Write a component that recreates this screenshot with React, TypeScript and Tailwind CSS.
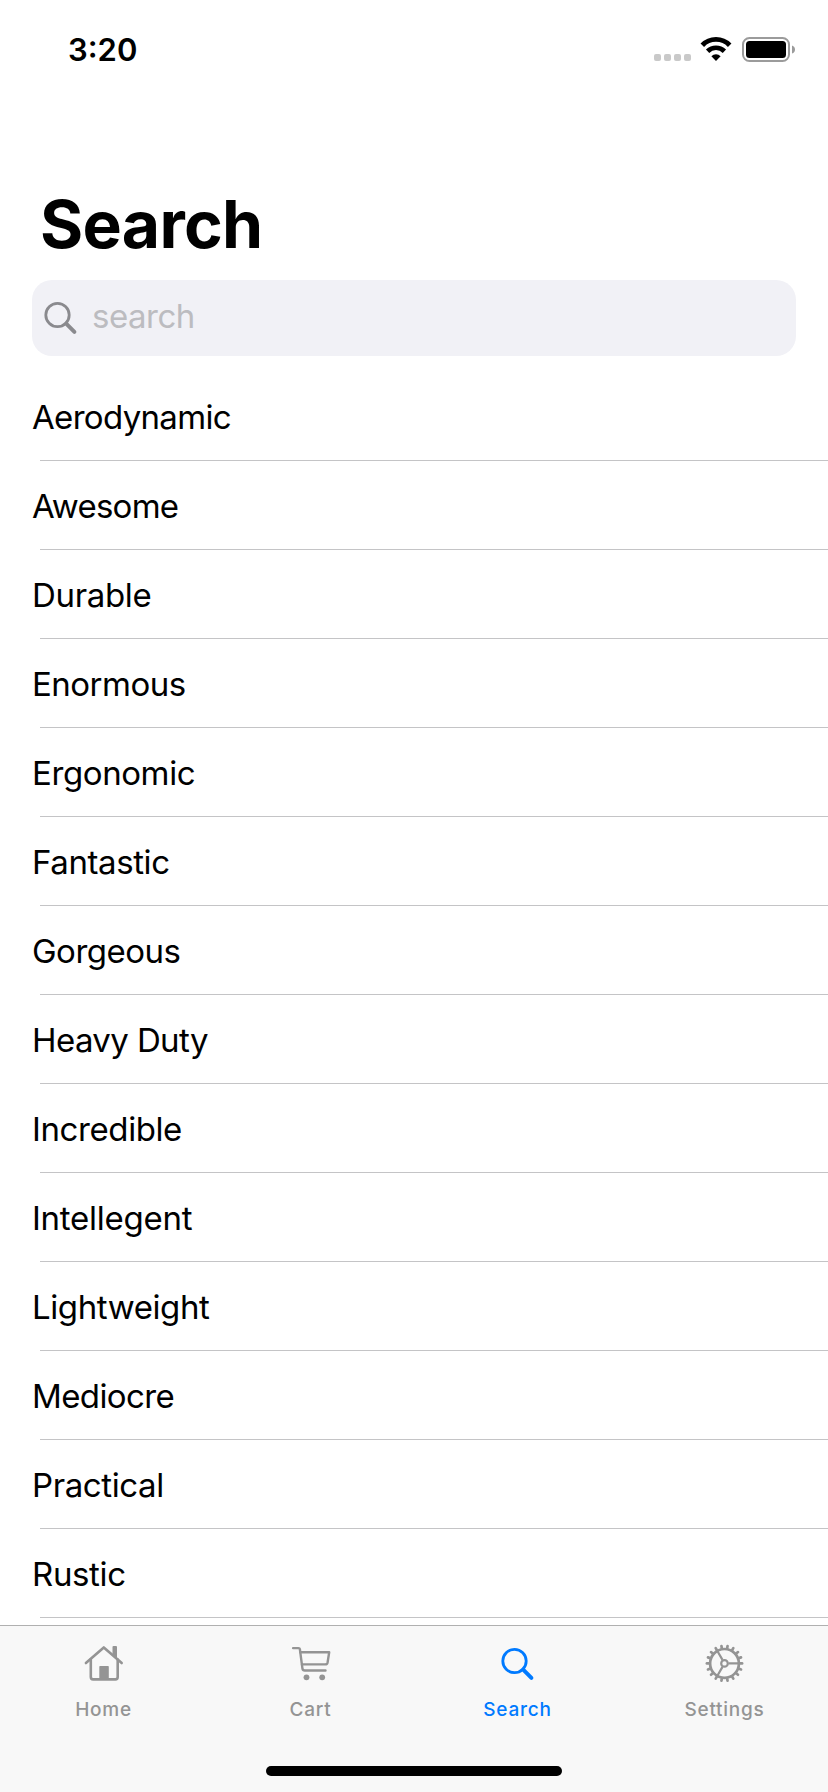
import type { ReactNode } from "react";

const items = [
  { name: "Aerodynamic", tracking: "tracking-[-0.68px]" },
  { name: "Awesome", tracking: "tracking-[-0.75px]" },
  { name: "Durable", tracking: "tracking-[-0.35px]" },
  { name: "Enormous", tracking: "tracking-[-0.5px]" },
  { name: "Ergonomic", tracking: "tracking-[-0.4px]" },
  { name: "Fantastic", tracking: "tracking-[-0.4px]" },
  { name: "Gorgeous", tracking: "tracking-[-0.5px]" },
  { name: "Heavy Duty", tracking: "tracking-[-0.6px]" },
  { name: "Incredible", tracking: "tracking-[-0.4px]" },
  { name: "Intellegent", tracking: "tracking-[-0.25px]" },
  { name: "Lightweight", tracking: "tracking-[-0.4px]" },
  { name: "Mediocre", tracking: "tracking-[-0.6px]" },
  { name: "Practical", tracking: "tracking-[-0.4px]" },
  { name: "Rustic", tracking: "tracking-[-0.35px]" },
];

function SearchIcon() {
  return (
    <svg className="size-11 shrink-0" viewBox="0 0 44 44" fill="none" stroke="currentColor" strokeLinecap="round">
      <circle cx="18.5" cy="21" r="11.7" strokeWidth="2.8" />
      <path d="M27.2 29.7L35.4 37.8" strokeWidth="4" />
    </svg>
  );
}

function HomeIcon() {
  return (
    <svg className="size-11 shrink-0" viewBox="0 0 44 44" fill="none" stroke="currentColor" strokeWidth="2.6" strokeLinecap="round" strokeLinejoin="round">
      <path d="M3.9 23L21.8 7.4L39.7 23" />
      <path d="M8.8 19.5V37.1Q8.8 39.4 11.1 39.4H33.4Q35.7 39.4 35.7 37.1V19.5" />
      <path d="M17.3 26.8Q17.3 26 18.1 26H26Q26.8 26 26.8 26.8V39H17.3Z" fill="currentColor" stroke="none" />
      <path d="M30.5 7Q30.5 6 31.5 6H34Q35 6 35 7V18.5L30.5 14.6Z" fill="currentColor" stroke="none" />
    </svg>
  );
}

function CartIcon() {
  return (
    <svg className="size-11 shrink-0" viewBox="0 0 44 44" fill="none" stroke="currentColor" strokeWidth="2.4" strokeLinecap="round" strokeLinejoin="round">
      <path d="M4.1 8.1H9.5Q10.7 8.1 10.9 9.3L13.4 28.3Q13.7 30.5 15.8 30.5H36.5" />
      <path d="M11.4 12.2H40.2L38.6 22.4Q38.2 24.4 36.2 24.4H13" />
      <circle cx="17.5" cy="37.3" r="2.9" fill="currentColor" stroke="none" />
      <circle cx="33.2" cy="37.3" r="2.9" fill="currentColor" stroke="none" />
    </svg>
  );
}

const teeth = Array.from({ length: 18 }, (_, i) => i * 20);

function SettingsIcon() {
  return (
    <svg className="size-11 shrink-0" viewBox="0 0 44 44" fill="none" stroke="currentColor">
      <g transform="translate(21.5 23.4)">
        <circle r="14.4" strokeWidth="2.7" />
        <circle r="3.3" strokeWidth="2.2" />
        <path d="M4 0H14M-2 -3.5L-7 -12.1M-2 3.5L-7 12.1" strokeWidth="2.2" />
        {teeth.map((a) => (
          <path key={a} d="M15 0H17.6" strokeWidth="2.7" strokeLinecap="round" transform={`rotate(${a})`} />
        ))}
      </g>
    </svg>
  );
}

function StatusBar() {
  return (
    <header className="flex h-[100px] shrink-0 items-start justify-between pr-8 pl-[68px]">
      <div className="pt-[34px] text-[31px] leading-8 font-semibold">3:20</div>
      <div className="flex items-start pt-[36px]">
        <div className="mt-[18px] flex gap-[3px]">
          <span className="size-[7px] rounded-[2px] bg-[#c9c9c9]" />
          <span className="size-[7px] rounded-[2px] bg-[#c9c9c9]" />
          <span className="size-[7px] rounded-[2px] bg-[#c9c9c9]" />
          <span className="size-[7px] rounded-[2px] bg-[#c9c9c9]" />
        </div>
        <svg className="ml-[9px] h-[26px] w-[33px]" viewBox="0 0 33 26" fill="none" stroke="#000">
          <path d="M2.3 9.2A19 19 0 0 1 29.7 9.2" strokeWidth="4.9" />
          <path d="M7.6 15.2A12 12 0 0 1 24.4 15.2" strokeWidth="4.7" />
          <path d="M16 24.9L11.4 20.2A6.6 6.6 0 0 1 20.6 20.2Z" fill="#000" stroke="none" />
        </svg>
        <svg className="ml-[9px] h-[27px] w-[54px]" viewBox="0 0 54 27">
          <rect x="1" y="2" width="46" height="23" rx="6.5" fill="none" stroke="#9b9b9b" strokeWidth="2" />
          <rect x="4" y="5" width="40" height="17" rx="3.5" fill="#000" />
          <path d="M50 9.5Q53 10.5 53 13.5T50 17.5Z" fill="#9b9b9b" />
        </svg>
      </div>
    </header>
  );
}

function Tab({ label, icon, active = false }: { label: string; icon: ReactNode; active?: boolean }) {
  return (
    <button
      type="button"
      className={`flex flex-1 flex-col items-center pt-[14px] ${active ? "text-[#007aff]" : "text-[#949494]"}`}
    >
      {icon}
      <span className="mt-[14px] text-[19px] leading-6 font-medium tracking-[0.75px]">{label}</span>
    </button>
  );
}

export default function App() {
  return (
    <div className="flex h-[1792px] w-[828px] flex-col overflow-hidden bg-white font-['Inter',sans-serif] text-black">
      <StatusBar />
      <h1 className="mt-[84px] shrink-0 pl-[40px] text-[66px] leading-[80px] font-bold tracking-[-0.7px]">Search</h1>
      <div className="mx-8 mt-4 flex h-[76px] shrink-0 items-start rounded-[20px] bg-[#f1f1f6] pt-[14px] pl-[7px] text-[#8a8a8e]">
        <SearchIcon />
        <input
          placeholder="search"
          className="mt-px ml-[9px] h-[44px] w-[600px] bg-transparent text-[33px] tracking-[-0.5px] outline-none placeholder:text-[#bcbcc0]"
        />
      </div>
      <ul className="mt-4 min-h-0 flex-1 overflow-hidden">
        {items.map(({ name, tracking }) => (
          <li key={name} className="h-[89px]">
            <div className={`h-[88px] pt-[24px] pl-8 text-[33px] leading-[42px] ${tracking}`}>{name}</div>
            <div className="ml-10 h-px bg-[#c4c4c6]" />
          </li>
        ))}
      </ul>
      <nav className="flex h-[167px] shrink-0 flex-col border-t border-[#b0b0b0] bg-[#f8f8f8]">
        <div className="flex">
          <Tab label="Home" icon={<HomeIcon />} />
          <Tab label="Cart" icon={<CartIcon />} />
          <Tab label="Search" icon={<SearchIcon />} active />
          <Tab label="Settings" icon={<SettingsIcon />} />
        </div>
        <div className="mx-auto mt-auto mb-4 h-[10px] w-[296px] rounded-full bg-black" />
      </nav>
    </div>
  );
}
